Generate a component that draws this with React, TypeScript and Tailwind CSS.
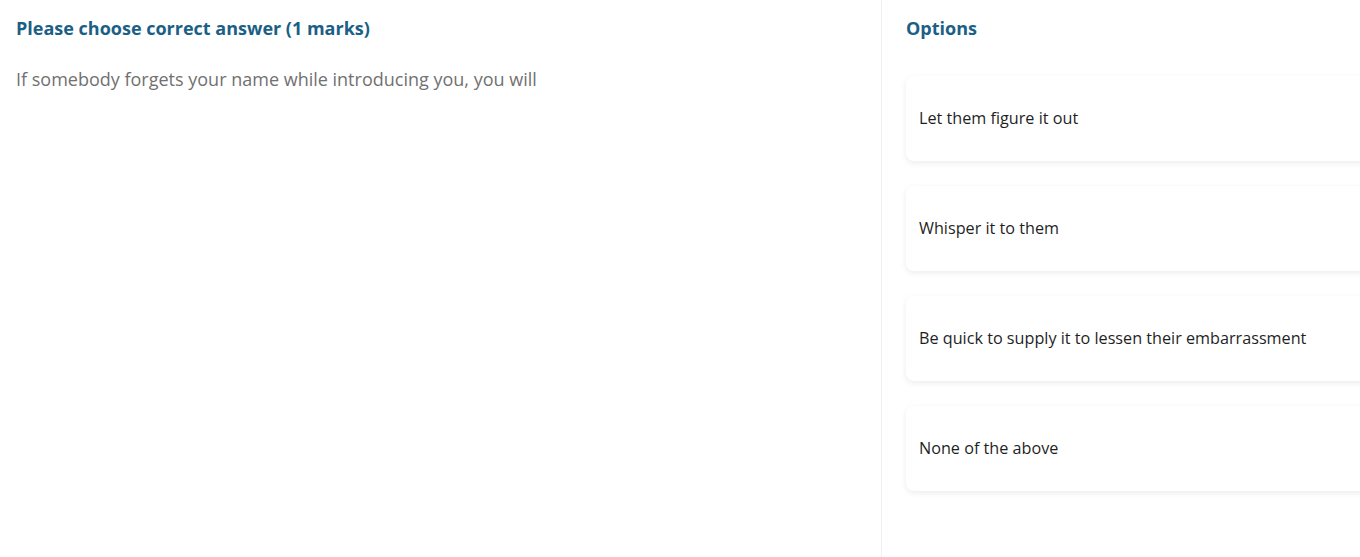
const options = [
  "Let them figure it out",
  "Whisper it to them",
  "Be quick to supply it to lessen their embarrassment",
  "None of the above",
];

export default function App() {
  return (
    <div
      className="flex h-[557px] w-[1360px] overflow-hidden bg-white"
      style={{ fontFamily: '"Open Sans", sans-serif' }}
    >
      <div className="w-[882px] shrink-0 border-r border-[#f1f1f3] px-4 pt-[14px]">
        <h2 className="text-lg leading-7 font-bold text-[#1b5f86]">
          Please choose correct answer (1 marks)
        </h2>
        <p className="mt-[23px] text-lg leading-7 text-[#717171]">
          If somebody forgets your name while introducing you, you will
        </p>
      </div>
      <div className="shrink-0 pl-6 pt-[14px]">
        <h2 className="text-lg leading-7 font-bold text-[#1b5f86]">Options</h2>
        <div className="mt-[34px] flex flex-col gap-[25px]">
          {options.map((opt) => (
            <div
              key={opt}
              className="flex h-[85px] w-[520px] items-center rounded-lg bg-white pl-[13px] text-[16.2px] text-[#1f1f1f] shadow-[0_2px_6px_rgba(0,0,0,0.08)]"
            >
              {opt}
            </div>
          ))}
        </div>
      </div>
    </div>
  );
}
